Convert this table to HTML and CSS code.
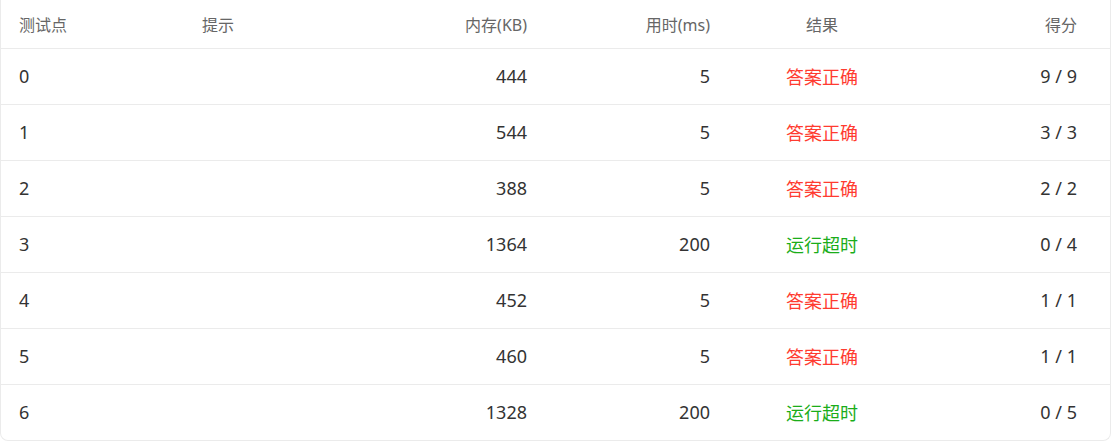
FILE: index.html
```html
<!DOCTYPE html>
<html lang="zh">
<head>
<meta charset="utf-8">
<link rel="stylesheet" href="styles.css">
</head>
<body>
<div class="card">
  <table class="result-table">
    <colgroup>
      <col class="c1"><col class="c2"><col class="c3"><col class="c4"><col class="c5"><col class="c6">
    </colgroup>
    <thead>
      <tr>
        <th class="left">测试点</th>
        <th class="left">提示</th>
        <th class="right">内存(KB)</th>
        <th class="right">用时(ms)</th>
        <th class="center">结果</th>
        <th class="right last">得分</th>
      </tr>
    </thead>
    <tbody>
      <tr><td class="left">0</td><td></td><td class="right">444</td><td class="right">5</td><td class="center ac">答案正确</td><td class="right last">9 / 9</td></tr>
      <tr><td class="left">1</td><td></td><td class="right">544</td><td class="right">5</td><td class="center ac">答案正确</td><td class="right last">3 / 3</td></tr>
      <tr><td class="left">2</td><td></td><td class="right">388</td><td class="right">5</td><td class="center ac">答案正确</td><td class="right last">2 / 2</td></tr>
      <tr><td class="left">3</td><td></td><td class="right">1364</td><td class="right">200</td><td class="center tle">运行超时</td><td class="right last">0 / 4</td></tr>
      <tr><td class="left">4</td><td></td><td class="right">452</td><td class="right">5</td><td class="center ac">答案正确</td><td class="right last">1 / 1</td></tr>
      <tr><td class="left">5</td><td></td><td class="right">460</td><td class="right">5</td><td class="center ac">答案正确</td><td class="right last">1 / 1</td></tr>
      <tr><td class="left">6</td><td></td><td class="right">1328</td><td class="right">200</td><td class="center tle">运行超时</td><td class="right last">0 / 5</td></tr>
    </tbody>
  </table>
</div>
</body>
</html>
```
FILE: styles.css
```css
* { box-sizing: border-box; }
html, body { margin: 0; padding: 0; background: #fff; }
body {
  font-family: "Noto Sans", "Noto Sans CJK SC", sans-serif;
  color: #333;
}
.card {
  width: 1111px;
  border: 1px solid #ebebeb;
  border-top: none;
  border-radius: 0 0 8px 8px;
  overflow: hidden;
}
.result-table {
  width: 100%;
  border-collapse: collapse;
  table-layout: fixed;
}
.c1 { width: 183px; }
.c2 { width: 183px; }
.c3 { width: 178px; }
.c4 { width: 183px; }
.c5 { width: 188px; }
.c6 { width: auto; }
th {
  height: 48px;
  font-size: 16px;
  font-weight: normal;
  color: #666;
  padding: 0 18px;
  border-bottom: 1px solid #ebebeb;
}
td {
  height: 56px;
  font-size: 18px;
  padding: 0 18px;
  color: #333;
  border-bottom: 1px solid #ebebeb;
}
th.last, td.last { padding-right: 33px; }
tbody tr:last-child td { border-bottom: none; }
.left { text-align: left; }
.right { text-align: right; }
.center { text-align: center; }
.ac { color: #ff3b30; }
.tle { color: #1aad19; }
```
